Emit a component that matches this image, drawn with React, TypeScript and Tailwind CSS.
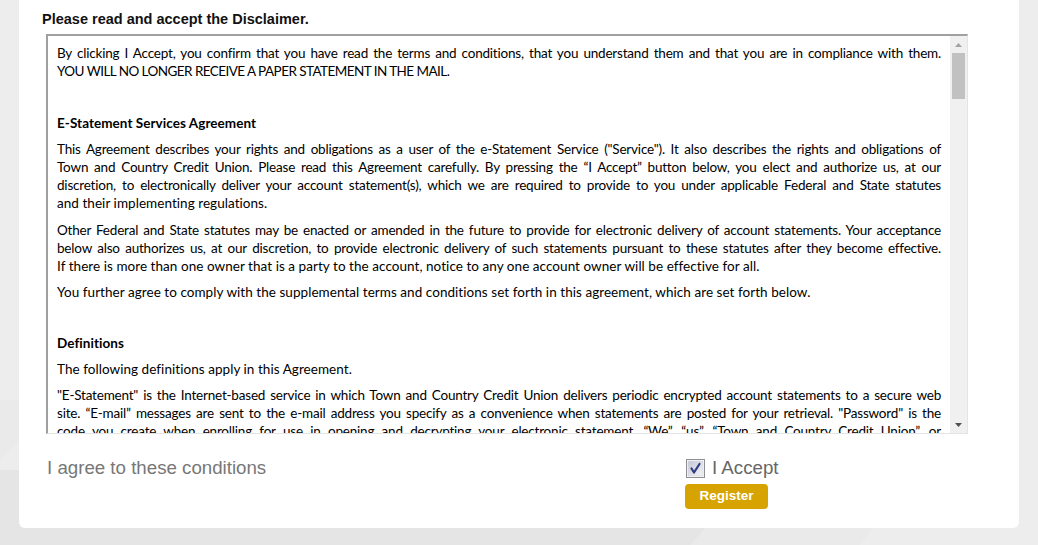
import React from "react"

const BODY_FONT = "font-['Lato','Carlito','Noto_Sans',sans-serif]"
const ARIAL = "font-['Liberation_Sans',Arial,sans-serif]"

type Block = { lines: string[]; bold?: boolean; mb?: string; lastTracking?: string }

const BLOCKS: Block[] = [
  {
    lines: [
      "By clicking I Accept, you confirm that you have read the terms and conditions, that you understand them and that you are in compliance with them.",
      "YOU WILL NO LONGER RECEIVE A PAPER STATEMENT IN THE MAIL.",
    ],
    lastTracking: "tracking-[-0.55px]",
  },
  { lines: ["\u00a0"] },
  { lines: ["E-Statement Services Agreement"], bold: true },
  {
    lines: [
      'This Agreement describes your rights and obligations as a user of the e-Statement Service ("Service"). It also describes the rights and obligations of',
      "Town and Country Credit Union. Please read this Agreement carefully. By pressing the \u201cI Accept\u201d button below, you elect and authorize us, at our",
      "discretion, to electronically deliver your account statement(s), which we are required to provide to you under applicable Federal and State statutes",
      "and their implementing regulations.",
    ],
    mb: "mb-[9px]",
  },
  {
    lines: [
      "Other Federal and State statutes may be enacted or amended in the future to provide for electronic delivery of account statements. Your acceptance",
      "below also authorizes us, at our discretion, to provide electronic delivery of such statements pursuant to these statutes after they become effective.",
      "If there is more than one owner that is a party to the account, notice to any one account owner will be effective for all.",
    ],
  },
  {
    lines: [
      "You further agree to comply with the supplemental terms and conditions set forth in this agreement, which are set forth below.",
    ],
  },
  { lines: ["\u00a0"], mb: "mb-[7px]" },
  { lines: ["Definitions"], bold: true },
  { lines: ["The following definitions apply in this Agreement."] },
  {
    lines: [
      '"E-Statement" is the Internet-based service in which Town and Country Credit Union delivers periodic encrypted account statements to a secure web',
      'site. \u201cE-mail\u201d messages are sent to the e-mail address you specify as a convenience when statements are posted for your retrieval.  "Password" is the',
      "code you create when enrolling for use in opening and decrypting your electronic statement. \u201cWe\u201d, \u201cus\u201d, \u201cTown and Country Credit Union\u201d, or",
      "\u201cCredit Union\u201d refers to Town and Country Credit Union. \u201cYou\u201d and \u201cyour\u201d refer to each owner of the account.",
    ],
  },
]

// lines before the last one are stretched edge to edge, like the reference's justified text
function Paragraph({ block }: { block: Block }) {
  return (
    <div className={`${block.mb ?? "mb-2"} ${block.bold ? "font-bold" : ""}`}>
      {block.lines.map((line, i) => (
        <div
          key={i}
          className={
            i < block.lines.length - 1
              ? "text-justify tracking-[-0.2px] [text-align-last:justify]"
              : `text-left ${block.lastTracking ?? "tracking-[0.05px]"}`
          }
        >
          {line}
        </div>
      ))}
    </div>
  )
}

function Scrollbar() {
  return (
    <div className="flex w-[17px] shrink-0 flex-col bg-[#f0f0f0]">
      <div className="flex h-[17px] items-center justify-center">
        <svg width="7" height="4" viewBox="0 0 7 4">
          <path d="M3.5 0 L7 4 L0 4 Z" fill="#a3a3a3" />
        </svg>
      </div>
      <div className="mx-[2px] h-[46px] bg-[#c1c1c1]" />
      <div className="flex-1" />
      <div className="flex h-[17px] items-center justify-center">
        <svg width="7" height="4" viewBox="0 0 7 4">
          <path d="M0 0 L7 0 L3.5 4 Z" fill="#505050" />
        </svg>
      </div>
    </div>
  )
}

function CheckedBox() {
  return (
    <svg width="19" height="19" viewBox="0 0 19 19" className="shrink-0">
      <defs>
        <linearGradient id="cb" x1="0" y1="0" x2="1" y2="1">
          <stop offset="0" stopColor="#c4c7d4" />
          <stop offset="1" stopColor="#f4f4f8" />
        </linearGradient>
      </defs>
      <rect x="0.5" y="0.5" width="18" height="18" fill="#ffffff" stroke="#8e8f94" />
      <rect x="2" y="2" width="15" height="15" fill="url(#cb)" stroke="#d7d8de" strokeWidth="0.8" />
      <path
        d="M5.5 9.5 L8 13.5 L13.5 5"
        fill="none"
        stroke="#2f3c84"
        strokeWidth="2.2"
        strokeLinecap="round"
        strokeLinejoin="round"
      />
    </svg>
  )
}

export default function App() {
  return (
    <div className="relative h-[545px] w-[1038px] overflow-hidden bg-[#e5e5e5]">
      <svg
        className="absolute inset-0"
        width="1038"
        height="545"
        viewBox="0 0 1038 545"
      >
        <polygon points="0,0 1038,0 1038,545 780,545 830,470 0,470" fill="#ededed" />
        <polygon points="0,400 60,400 0,460" fill="#eaeaea" />
        <polygon points="690,545 740,490 900,490 860,545" fill="#eaeaea" />
      </svg>

      <div className="relative ml-[19px] w-[1000px] rounded-b-[6px] bg-white pb-[19px] pl-[23px] pt-[11px]">
        <h1 className={`${ARIAL} text-[14.5px] font-bold leading-[16px] text-[#111]`}>
          Please read and accept the Disclaimer.
        </h1>

        <div className="ml-[4px] mt-[7px] flex h-[400px] w-[922px] border-b border-l-2 border-r border-t-2 border-b-[#e4e4e4] border-l-[#a0a0a0] border-r-[#e4e4e4] border-t-[#a0a0a0] bg-white">
          <div
            className={`${BODY_FONT} flex-1 overflow-hidden px-[9px] pt-[8px] text-[13.5px] leading-[18px] text-black`}
          >
            {BLOCKS.map((b, i) => (
              <Paragraph key={i} block={b} />
            ))}
          </div>
          <Scrollbar />
        </div>

        <div className={`${ARIAL} ml-[4px] mt-[23px] grid grid-cols-[640px_1fr]`}>
          <div className="pl-[1px] text-[18.7px] leading-[22px] text-[#777]">
            I agree to these conditions
          </div>
          <div className="flex flex-col items-start">
            <label className="flex items-center gap-[7px] text-[18.7px] leading-[22px] text-[#666]">
              <CheckedBox />
              I Accept
            </label>
            <button
              type="button"
              className="ml-[-1px] mt-[5px] h-[25px] w-[83px] rounded-[4px] bg-[#d6a300] text-[13.5px] font-bold text-white"
            >
              Register
            </button>
          </div>
        </div>
      </div>
    </div>
  )
}
